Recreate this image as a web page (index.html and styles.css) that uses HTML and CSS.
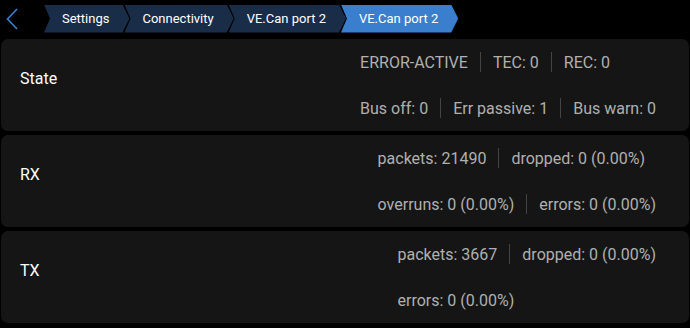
FILE: index.html
```html
<!DOCTYPE html>
<html lang="en">
<head>
    <meta charset="UTF-8">
    <meta name="viewport" content="width=device-width, initial-scale=1.0">
    <title>VE.Can port 2</title>
    <link rel="stylesheet" href="styles.css">
</head>
<body>
    <div class="topbar">
        <div class="back">
            <svg width="12" height="22" viewBox="0 0 12 22">
                <path d="M11 1 L1.5 11 L11 21" fill="none" stroke="#3a80d2" stroke-width="1.6"/>
            </svg>
        </div>
        <div class="crumbs">
            <div class="crumb first">Settings</div>
            <div class="crumb">Connectivity</div>
            <div class="crumb">VE.Can port 2</div>
            <div class="crumb active">VE.Can port 2</div>
        </div>
    </div>

    <div class="list">
        <div class="card">
            <div class="label">State</div>
            <div class="values">
                <div class="row">
                    <span>ERROR-ACTIVE</span><i class="sep"></i>
                    <span>TEC: 0</span><i class="sep"></i>
                    <span>REC: 0</span>
                </div>
                <div class="row">
                    <span>Bus off: 0</span><i class="sep"></i>
                    <span>Err passive: 1</span><i class="sep"></i>
                    <span>Bus warn: 0</span>
                </div>
            </div>
        </div>

        <div class="card">
            <div class="label">RX</div>
            <div class="values">
                <div class="row">
                    <span>packets: 21490</span><i class="sep"></i>
                    <span>dropped: 0 (0.00%)</span>
                </div>
                <div class="row">
                    <span>overruns: 0 (0.00%)</span><i class="sep"></i>
                    <span>errors: 0 (0.00%)</span>
                </div>
            </div>
        </div>

        <div class="card">
            <div class="label">TX</div>
            <div class="values">
                <div class="row">
                    <span>packets: 3667</span><i class="sep"></i>
                    <span>dropped: 0 (0.00%)</span>
                </div>
                <div class="row">
                    <span>errors: 0 (0.00%)</span>
                </div>
            </div>
        </div>
    </div>
</body>
</html>
```

FILE: styles.css
```css
/* Reset */
* {
    margin: 0;
    padding: 0;
    box-sizing: border-box;
}

body {
    font-family: Roboto, "Liberation Sans", sans-serif;
    background: #000;
    color: #fff;
    width: 690px;
    height: 328px;
    overflow: hidden;
}

/* Top bar with back button and breadcrumbs */
.topbar {
    display: flex;
    align-items: center;
    height: 39px;
    padding: 0 0 1px 6px;
}

.back {
    display: flex;
    width: 38px;
    height: 28px;
    align-items: center;
}

.crumbs {
    display: flex;
    height: 28px;
    margin-top: -1px;
}

.crumb {
    display: flex;
    align-items: center;
    height: 28px;
    padding: 0 20px 0 18px;
    margin-left: -5px;
    font-size: 13px;
    background: #1a2d48;
    clip-path: polygon(0 0, calc(100% - 7px) 0, 100% 50%, calc(100% - 7px) 100%, 0 100%, 6px 50%);
}

.crumb.first {
    margin-left: 0;
}

.crumb.active {
    background: #3a7fcd;
}

/* Cards */
.list {
    display: flex;
    flex-direction: column;
    gap: 4px;
    padding: 0 1px;
}

.card {
    display: flex;
    height: 92px;
    background: #151515;
    border-radius: 7px;
}

.label {
    align-self: center;
    padding: 0 0 13px 19px;
    font-size: 16px;
}

.values {
    display: flex;
    flex-direction: column;
    margin-left: auto;
    padding-right: 33px;
    color: #b0b0b0;
    font-size: 16px;
}

.row {
    display: flex;
    align-items: center;
    height: 46px;
    white-space: nowrap;
}

.sep {
    width: 1px;
    height: 20px;
    margin: 0 12px;
    background: #444;
}
```
